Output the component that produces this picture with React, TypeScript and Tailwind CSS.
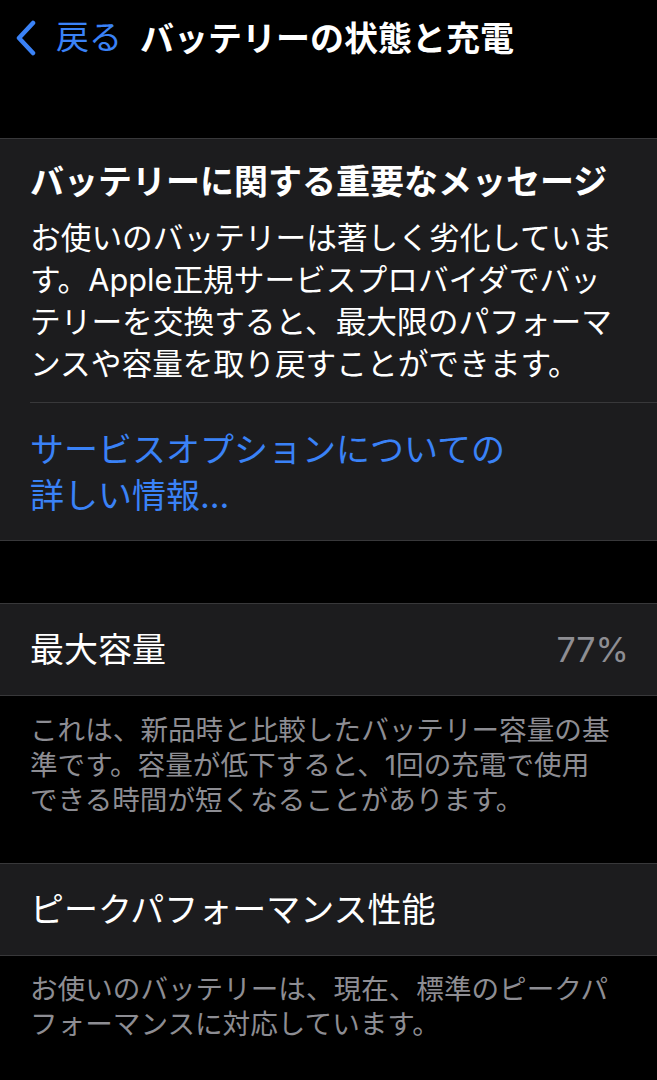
import React from 'react';

const font = { fontFamily: 'Inter, "Noto Sans CJK JP", sans-serif' };

function Card({ children }: { children: React.ReactNode }) {
    return (
        <div className="bg-[#1c1c1e] border-y border-[#38383a]">
            {children}
        </div>
    );
}

function Row({ label, value }: { label: string; value?: string }) {
    return (
        <Card>
            <div className="h-[91px] pl-[30px] pr-[28px] flex items-center justify-between">
                <span className="text-[34px] text-white">{label}</span>
                {value && <span className="text-[34px] text-[#8e8e93]">{value}</span>}
            </div>
        </Card>
    );
}

function Footnote({ lines, className }: { lines: string[]; className?: string }) {
    return (
        <div className={`px-[30px] text-[27.6px] leading-[35px] text-[#8d8d93] ${className ?? ''}`}>
            {lines.map((l, i) => (
                <div key={i}>{l}</div>
            ))}
        </div>
    );
}

export default function App() {
    return (
        <div className="w-[657px] h-[1080px] bg-black overflow-hidden" style={font}>
            {/* Nav bar */}
            <div className="h-[76px] flex items-center pl-[16px]">
                <svg width="20" height="36" viewBox="0 0 20 36" className="mr-[20px]">
                    <path d="M17 3 L3 18 L17 33" fill="none" stroke="#3a82f7" strokeWidth="4.5" strokeLinecap="round" strokeLinejoin="round" />
                </svg>
                <span className="text-[33px] text-[#3a82f7] mr-[18px]">戻る</span>
                <span className="text-[34px] font-bold text-white">バッテリーの状態と充電</span>
            </div>
            <div className="h-[62px]" />

            {/* Important message */}
            <Card>
                <div className="pl-[30px]">
                    <div className="pr-[20px] pt-[21px] pb-[17px]">
                        <div className="text-[34px] leading-[44px] font-bold text-white">
                            バッテリーに関する重要なメッセージ
                        </div>
                        <div className="mt-[13px] text-[30.7px] leading-[42px] text-white">
                            <div>お使いのバッテリーは著しく劣化していま</div>
                            <div>す。Apple正規サービスプロバイダでバッ</div>
                            <div>テリーを交換すると、最大限のパフォーマ</div>
                            <div>ンスや容量を取り戻すことができます。</div>
                        </div>
                    </div>
                    <div className="h-px bg-[#38383a]" />
                    <div className="pt-[24px] pb-[21px] text-[34px] leading-[46px] text-[#3a82f7]">
                        <div>サービスオプションについての</div>
                        <div>詳しい情報...</div>
                    </div>
                </div>
            </Card>
            <div className="h-[62px]" />

            {/* Max capacity */}
            <Row label="最大容量" value="77%" />
            <Footnote
                className="pt-[17px] pb-[45px]"
                lines={[
                    'これは、新品時と比較したバッテリー容量の基',
                    '準です。容量が低下すると、1回の充電で使用',
                    'できる時間が短くなることがあります。',
                ]}
            />

            {/* Peak performance */}
            <Row label="ピークパフォーマンス性能" />
            <Footnote
                className="pt-[16px]"
                lines={[
                    'お使いのバッテリーは、現在、標準のピークパ',
                    'フォーマンスに対応しています。',
                ]}
            />
        </div>
    );
}
